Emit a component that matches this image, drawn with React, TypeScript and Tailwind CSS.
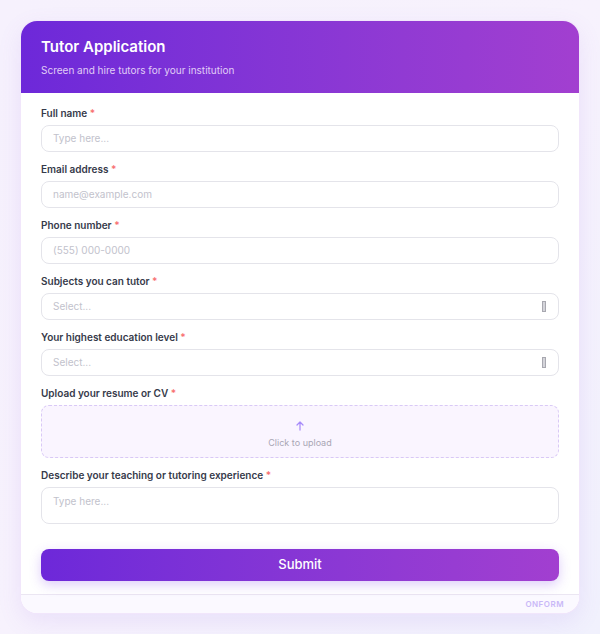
import React from 'react'

const font = { fontFamily: 'Inter, "Noto Sans", sans-serif' }

function Label({ text }: { text: string }) {
    return (
        <div className="text-[10px] leading-[14px] font-semibold text-[#363a4a] mb-[5px]">
            {text} <span className="text-[#f87171]">*</span>
        </div>
    )
}

function TextInput({ placeholder }: { placeholder: string }) {
    return (
        <div className="h-[27px] rounded-[8px] border-[1.5px] border-[#e4e4ea] bg-white flex items-center px-[11px] text-[10px] text-[#c2c2cc]">
            {placeholder}
        </div>
    )
}

function SelectInput() {
    return (
        <div className="h-[27px] rounded-[8px] border-[1.5px] border-[#e4e4ea] bg-white flex items-center justify-between pl-[11px] pr-[12px] text-[10px] text-[#c2c2cc]">
            <span>Select...</span>
            <span className="w-[4px] h-[11px] border border-[#a8a8b0] bg-[#d4d4da]" />
        </div>
    )
}

export default function App() {
    return (
        <div style={font} className="min-h-[634px] w-[600px] bg-gradient-to-br from-[#f6f1fd] via-[#f7f2fd] to-[#f1f1fd] p-[21px]">
            <div className="rounded-[16px] overflow-hidden bg-white shadow-[0_0_0_1px_#f1e6fb,0_8px_24px_rgba(140,90,220,0.12)]">
                {/* header */}
                <div className="h-[72px] bg-gradient-to-r from-[#6d28d9] to-[#a23fd0] px-[20px] pt-[16px]">
                    <div className="text-[15px] leading-[20px] font-semibold text-white">Tutor Application</div>
                    <div className="mt-[7px] text-[10px] leading-[12px] text-[#e0cdf6]">Screen and hire tutors for your institution</div>
                </div>

                {/* body */}
                <div className="px-[20px] pt-[13px] pb-[13px]">
                    <div className="mb-[10px]">
                        <Label text="Full name" />
                        <TextInput placeholder="Type here..." />
                    </div>
                    <div className="mb-[10px]">
                        <Label text="Email address" />
                        <TextInput placeholder="name@example.com" />
                    </div>
                    <div className="mb-[10px]">
                        <Label text="Phone number" />
                        <TextInput placeholder="(555) 000-0000" />
                    </div>
                    <div className="mb-[10px]">
                        <Label text="Subjects you can tutor" />
                        <SelectInput />
                    </div>
                    <div className="mb-[10px]">
                        <Label text="Your highest education level" />
                        <SelectInput />
                    </div>
                    <div className="mb-[10px]">
                        <Label text="Upload your resume or CV" />
                        <div className="h-[53px] rounded-[8px] border-[1.5px] border-dashed border-[#d9c9f6] bg-[#faf5ff] flex flex-col items-center justify-center pt-[6px]">
                            <svg className="w-[12px] h-[12px] text-[#a78bfa]" fill="none" stroke="currentColor" viewBox="0 0 24 24">
                                <path strokeLinecap="round" strokeLinejoin="round" strokeWidth={2.5} d="M12 20V4m0 0l-6 6m6-6l6 6" />
                            </svg>
                            <div className="mt-[5px] text-[9px] leading-[12px] text-[#a9a6b4]">Click to upload</div>
                        </div>
                    </div>
                    <div>
                        <Label text="Describe your teaching or tutoring experience" />
                        <div className="h-[37px] rounded-[8px] border-[1.5px] border-[#e4e4ea] bg-white px-[11px] pt-[6px] text-[10px] leading-[14px] text-[#c2c2cc]">
                            Type here...
                        </div>
                    </div>

                    <button className="mt-[25px] w-full h-[32px] rounded-[8px] bg-gradient-to-r from-[#6d28d9] to-[#a23fd0] text-white text-[13px] font-medium shadow-[0_4px_12px_rgba(124,58,237,0.25)]">
                        Submit
                    </button>
                </div>

                {/* footer */}
                <div className="h-[19px] border-t border-[#ebe6f2] bg-[#fbf9ff] flex items-center justify-end pr-[15px]">
                    <span className="text-[8px] font-semibold tracking-[0.06em] text-[#c9b8f7]">ONFORM</span>
                </div>
            </div>
        </div>
    )
}
